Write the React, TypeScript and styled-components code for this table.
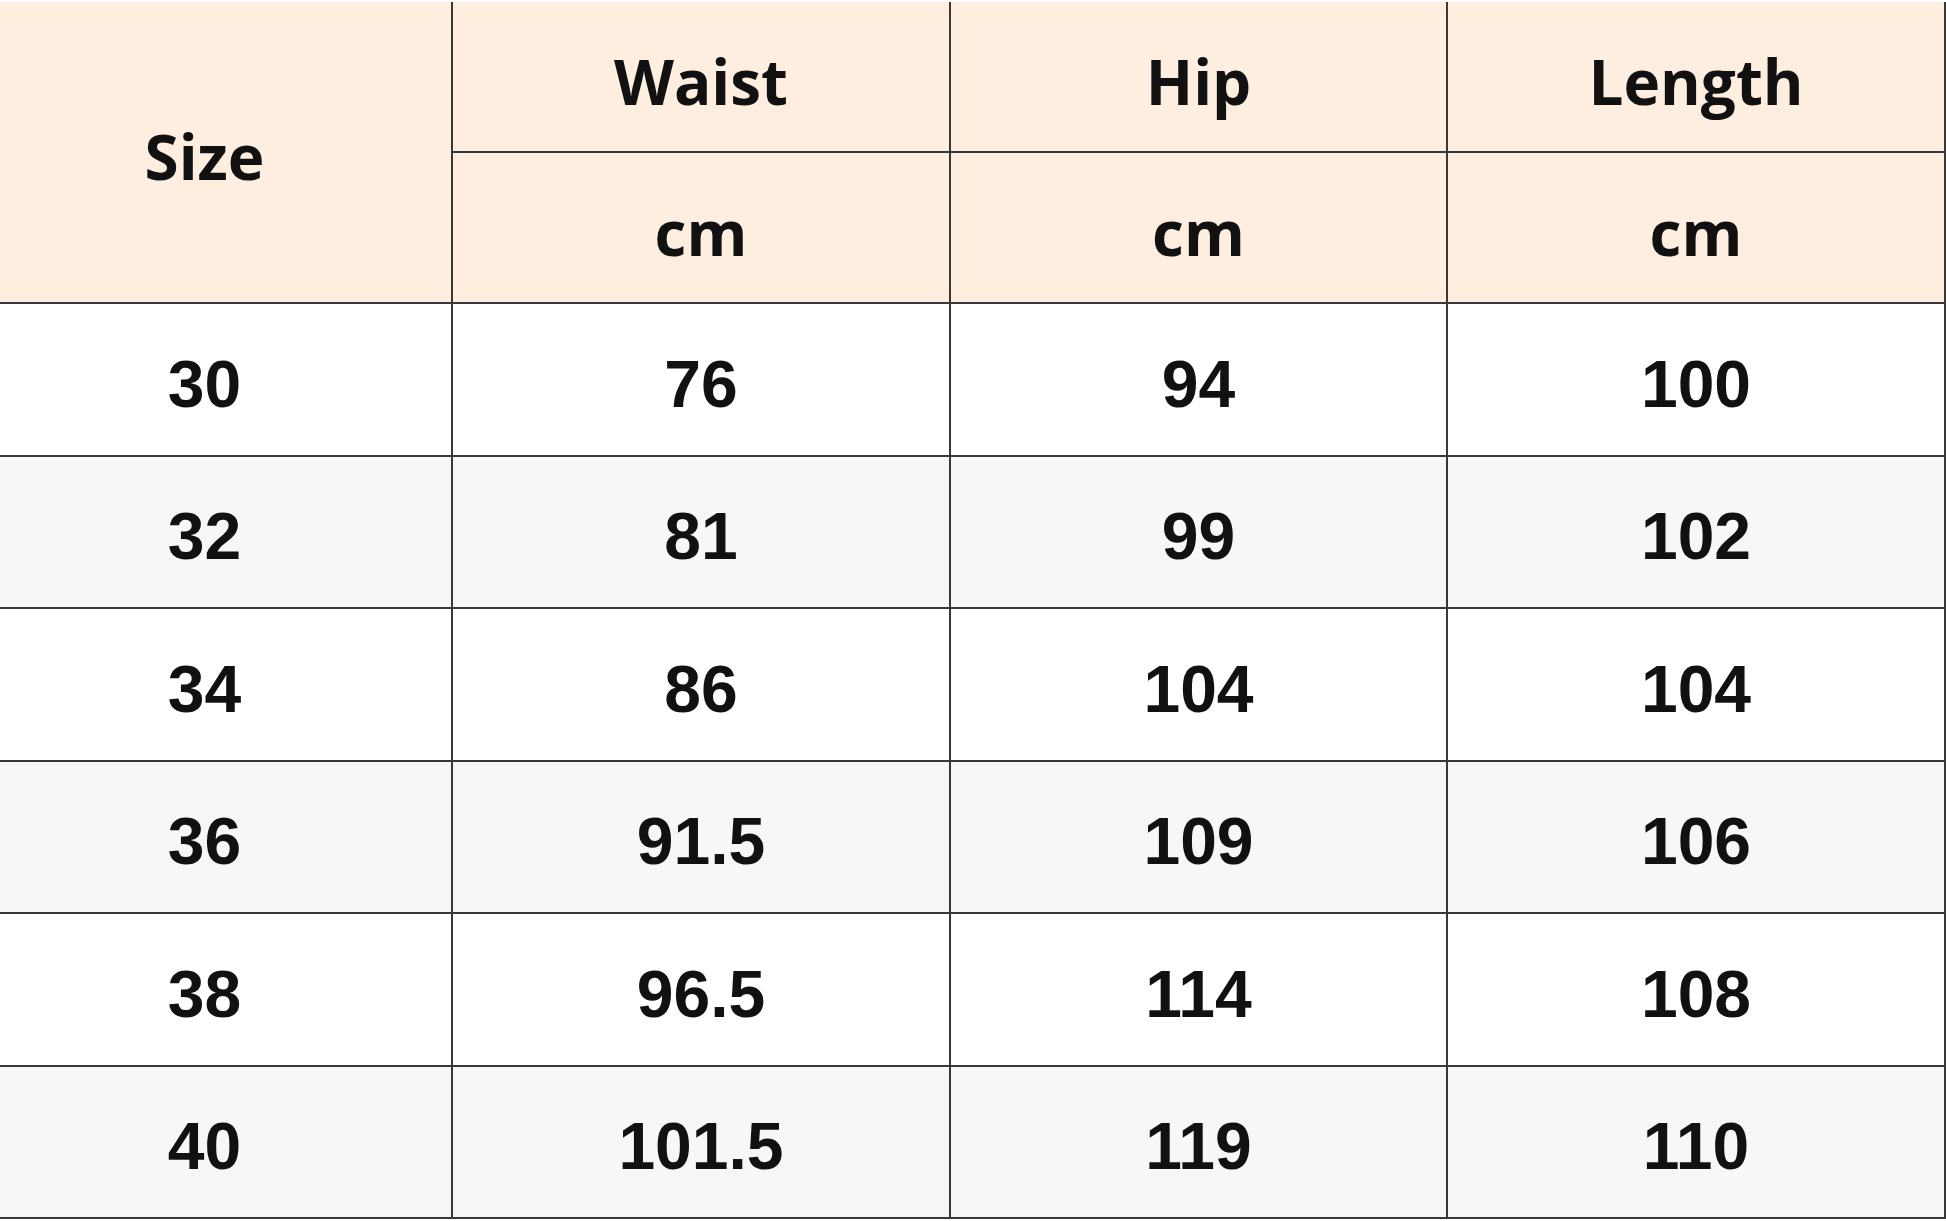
import React from 'react';
import styled, { createGlobalStyle } from 'styled-components';

const Global = createGlobalStyle`
  html, body {
    margin: 0;
    padding: 0;
    background: #ffffff;
  }
`;

const Page = styled.div`
  padding-top: 2px;
  width: 1946px;
`;

const Grid = styled.div`
  display: grid;
  grid-template-columns: 453px 498px 497px 498px;
  grid-template-rows: 151px 151px 153px 152px 153px 152px 153px 152px;
`;

const Cell = styled.div<{ $head?: boolean; $alt?: boolean; $span?: number; $first?: boolean }>`
  box-sizing: border-box;
  display: flex;
  align-items: center;
  justify-content: center;
  border-right: 2px solid #383838;
  border-bottom: 2px solid #383838;
  grid-row: ${(p) => (p.$span ? `span ${p.$span}` : 'auto')};
  background: ${(p) => (p.$head ? '#fdeedf' : p.$alt ? '#f7f7f7' : '#ffffff')};
  color: #111111;
  font-family: ${(p) => (p.$head ? '"Open Sans", "Noto Sans", sans-serif' : '"Liberation Sans", Arial, sans-serif')};
  font-weight: 700;
  font-size: ${(p) => (p.$head ? '62px' : '66px')};
  padding-top: 8px;
  padding-right: ${(p) => (p.$first ? '42px' : '0')};
`;

const rows = [
  ['30', '76', '94', '100'],
  ['32', '81', '99', '102'],
  ['34', '86', '104', '104'],
  ['36', '91.5', '109', '106'],
  ['38', '96.5', '114', '108'],
  ['40', '101.5', '119', '110'],
];

export default function App() {
  return (
    <Page>
      <Global />
      <Grid>
        <Cell $head $first $span={2}>Size</Cell>
        <Cell $head>Waist</Cell>
        <Cell $head>Hip</Cell>
        <Cell $head>Length</Cell>
        <Cell $head>cm</Cell>
        <Cell $head>cm</Cell>
        <Cell $head>cm</Cell>
        {rows.map((r, i) =>
          r.map((v, j) => (
            <Cell key={`${i}-${j}`} $alt={i % 2 === 1} $first={j === 0}>
              {v}
            </Cell>
          ))
        )}
      </Grid>
    </Page>
  );
}
